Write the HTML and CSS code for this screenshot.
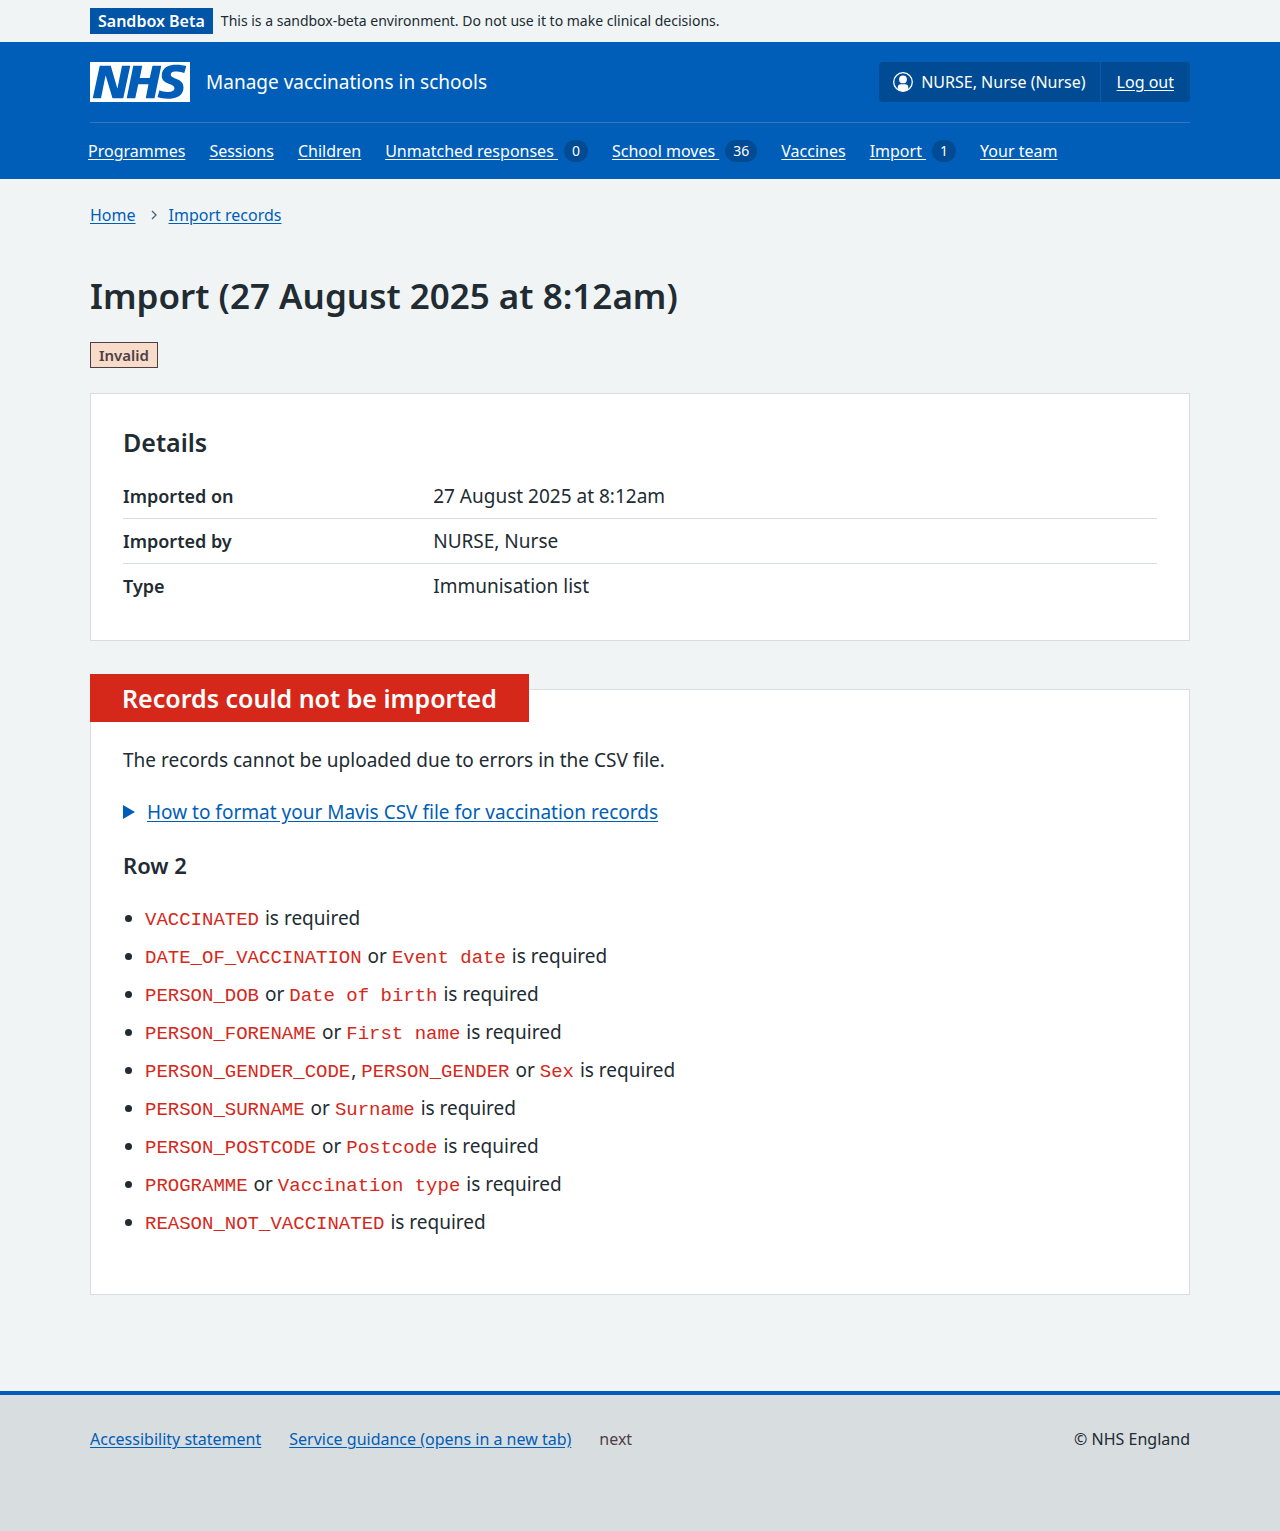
FILE: index.html
```html
<!DOCTYPE html>
<html lang="en">
<head>
<meta charset="utf-8">
<meta name="viewport" content="width=device-width, initial-scale=1">
<title>Import (27 August 2025 at 8:12am) – Manage vaccinations in schools</title>
<link rel="stylesheet" href="styles.css">
</head>
<body>
<div class="environment">
  <div class="container environment-inner">
    <strong class="environment-tag">Sandbox Beta</strong>
    <span>This is a sandbox-beta environment. Do not use it to make clinical decisions.</span>
  </div>
</div>

<header class="header">
  <div class="container">
    <div class="header-top">
      <a class="service" href="#">
        <svg class="logo" viewBox="0 0 200 80" width="100" height="40" role="img" aria-label="NHS"><path fill="#fff" d="M200 0v80H0V0h200Zm-27.5 5.5c-14.5 0-29 5-29 22 0 10.2 7.7 13.5 14.7 16.3l.7.3c5.4 2 10.1 3.9 10.1 8.4 0 6.5-8.5 7.5-14 7.5s-12.5-1.5-16-3.5L135 70c5.5 2 13.5 3.5 20 3.5 15.5 0 32-4.5 32-22.5 0-19.5-25.5-16.5-25.5-25.5 0-5.5 5.5-6.5 12.5-6.5a35 35 0 0 1 14.5 3l4-13.5c-4.5-2-12-3-20-3Zm-131 2h-22l-14 65H22l9-45h.5l13.5 45h21.5l14-65H64l-9 45h-.5l-13-45Zm63 0h-18l-13 65h17l6-28H117l-5.5 28H129l13.5-65H125L119.5 32h-20l5-24.5Z"/></svg>
        <span>Manage vaccinations in schools</span>
      </a>
      <div class="account">
        <span class="account-item">
          <svg viewBox="0 0 20 20" width="20" height="20" aria-hidden="true"><circle cx="10" cy="10" r="9.3" fill="none" stroke="#fff" stroke-width="1.3"/><circle cx="10" cy="7.4" r="3.9" fill="#fff"/><path fill="#fff" d="M4.8 17.8v-2.6a3 3 0 0 1 3-3h4.4a3 3 0 0 1 3 3v2.6A9.4 9.4 0 0 1 10 19.500a9.400 9.400 0 0 1-5.200-1.700Z"/></svg>
          NURSE, Nurse (Nurse)
        </span>
        <a class="account-item" href="#">Log out</a>
      </div>
    </div>
    <nav class="nav" aria-label="Menu">
      <a href="#"><span class="nav-text">Programmes</span></a>
      <a href="#"><span class="nav-text">Sessions</span></a>
      <a href="#"><span class="nav-text">Children</span></a>
      <a href="#"><span class="nav-text">Unmatched responses&nbsp;</span><span class="count">0</span></a>
      <a href="#"><span class="nav-text">School moves&nbsp;</span><span class="count">36</span></a>
      <a href="#"><span class="nav-text">Vaccines</span></a>
      <a href="#"><span class="nav-text">Import&nbsp;</span><span class="count">1</span></a>
      <a href="#"><span class="nav-text">Your team</span></a>
    </nav>
  </div>
</header>

<div class="container">
  <nav class="breadcrumb" aria-label="Breadcrumb">
    <a href="#">Home</a>
    <svg viewBox="0 0 6 10" width="6" height="10" aria-hidden="true"><path d="M1 1l4 4-4 4" fill="none" stroke="#4c6272" stroke-width="1.3"/></svg>
    <a href="#">Import records</a>
  </nav>
  <main class="main">
    <h1>Import (27 August 2025 at 8:12am)</h1>
    <strong class="status">Invalid</strong>

    <section class="card">
      <h2>Details</h2>
      <dl class="summary">
        <div class="summary-row"><dt>Imported on</dt><dd>27 August 2025 at 8:12am</dd></div>
        <div class="summary-row"><dt>Imported by</dt><dd>NURSE, Nurse</dd></div>
        <div class="summary-row"><dt>Type</dt><dd>Immunisation list</dd></div>
      </dl>
    </section>

    <section class="card card-errors">
      <h2 class="card-label">Records could not be imported</h2>
      <p>The records cannot be uploaded due to errors in the CSV file.</p>
      <details class="help">
        <summary><svg viewBox="0 0 12 14" width="12" height="14" aria-hidden="true"><path fill="#005eb8" d="M0 0l12 7-12 7Z"/></svg><span>How to format your Mavis CSV file for vaccination records</span></summary>
      </details>
      <h3>Row 2</h3>
      <ul class="errors">
        <li><code>VACCINATED</code> is required</li>
        <li><code>DATE_OF_VACCINATION</code> or <code>Event date</code> is required</li>
        <li><code>PERSON_DOB</code> or <code>Date of birth</code> is required</li>
        <li><code>PERSON_FORENAME</code> or <code>First name</code> is required</li>
        <li><code>PERSON_GENDER_CODE</code>, <code>PERSON_GENDER</code> or <code>Sex</code> is required</li>
        <li><code>PERSON_SURNAME</code> or <code>Surname</code> is required</li>
        <li><code>PERSON_POSTCODE</code> or <code>Postcode</code> is required</li>
        <li><code>PROGRAMME</code> or <code>Vaccination type</code> is required</li>
        <li><code>REASON_NOT_VACCINATED</code> is required</li>
      </ul>
    </section>
  </main>
</div>

<footer class="footer">
  <div class="container footer-inner">
    <a href="#">Accessibility statement</a>
    <a href="#">Service guidance (opens in a new tab)</a>
    <span class="release">next</span>
    <span class="copyright">© NHS England</span>
  </div>
</footer>
</body>
</html>
```
FILE: styles.css
```css
* {
  box-sizing: border-box;
}

html {
  background: #d8dde0;
}

body {
  margin: 0;
  background: #f0f4f5;
  color: #212b32;
  font: 19px/28px "Noto Sans", "Open Sans", sans-serif;
}

a {
  color: #005eb8;
  text-underline-offset: 2px;
}

h1, h2, h3, p, dl, dd, ul {
  margin: 0;
}

.container {
  max-width: 1100px;
  margin: 0 auto;
}

/* Environment banner */
.environment {
  padding: 8px 0;
  font-size: 14px;
  line-height: 26px;
}

.environment-inner {
  display: flex;
  gap: 8px;
}

.environment-tag {
  padding: 0 8px;
  background: #0055a6;
  color: #fff;
  font-size: 16px;
  font-weight: 600;
}

/* Header */
.header {
  background: #005eb8;
  color: #fff;
  font-size: 16px;
  line-height: 24px;
}

.header a {
  color: #fff;
}

.header-top {
  display: flex;
  justify-content: space-between;
  align-items: center;
  padding: 20px 0;
  border-bottom: 1px solid #337ab9;
}

.service {
  display: flex;
  align-items: center;
  gap: 16px;
  font-size: 19px;
  text-decoration: none;
}

.account {
  display: flex;
  border-radius: 4px;
  background: #004b93;
}

.account-item {
  display: flex;
  align-items: center;
  gap: 8px;
  padding: 8px 16px;
}

.account-item:first-child {
  padding: 8px 14px;
}

.account-item + .account-item {
  border-left: 1px solid #005eb8;
}

.nav {
  display: flex;
  gap: 24px;
  margin: 0 -2px;
  padding: 16px 0;
}

.nav a {
  display: flex;
  align-items: center;
  gap: 6px;
  text-decoration: none;
}

.nav-text {
  text-decoration: underline;
}

.count {
  padding: 0 8px;
  border-radius: 12px;
  background: #004b93;
  font-size: 14px;
  line-height: 22px;
}

/* Breadcrumb */
.breadcrumb {
  display: flex;
  align-items: center;
  gap: 12px;
  padding-top: 24px;
  font-size: 16px;
  line-height: 24px;
}

.breadcrumb svg {
  margin-left: 3px;
}

/* Main content */
.main {
  padding: 45px 0 96px;
}

h1 {
  font-size: 35px;
  line-height: 48px;
  font-weight: 600;
}

h2 {
  font-size: 25px;
  line-height: 32px;
  font-weight: 600;
}

h3 {
  font-size: 22px;
  line-height: 30px;
  font-weight: 600;
}

.status {
  display: block;
  width: fit-content;
  margin: 22px 0 25px;
  padding: 0 8px;
  border: 1px solid #503e46;
  background: #f6dcc9;
  color: #503e46;
  font-size: 15px;
  line-height: 24px;
  font-weight: 600;
}

.card {
  padding: 32px;
  border: 1px solid #d8dde0;
  background: #fff;
}

.summary {
  margin-top: 16px;
}

.summary-row {
  display: grid;
  grid-template-columns: 30% 1fr;
  align-items: baseline;
  padding: 8px 0;
}

.summary-row:not(:last-child) {
  border-bottom: 1px solid #d8dde0;
}

.summary dt {
  font-size: 18px;
  font-weight: 600;
}

.card-errors {
  margin-top: 48px;
  padding: 0 32px 58px;
}

.card-label {
  width: fit-content;
  margin: -16px -33px 24px;
  padding: 8px 32px;
  background: #d5281b;
  color: #fff;
}

.help {
  margin: 24px 0;
}

.help summary {
  display: flex;
  align-items: center;
  gap: 12px;
  width: fit-content;
  color: #005eb8;
  list-style: none;
  text-decoration: underline;
  text-underline-offset: 2px;
  cursor: pointer;
}

.errors {
  display: grid;
  gap: 10px;
  margin-top: 24px;
  padding-left: 22px;
}

code {
  margin-right: 1px;
  color: #d5281b;
  font: 19px/24px "Liberation Mono", monospace;
}

/* Footer */
.footer {
  padding: 32px 0 80px;
  border-top: 4px solid #005eb8;
  background: #d8dde0;
  font-size: 16px;
  line-height: 24px;
}

.footer-inner {
  display: flex;
  gap: 28px;
}

.release {
  color: #503e46;
}

.copyright {
  margin-left: auto;
}
```
